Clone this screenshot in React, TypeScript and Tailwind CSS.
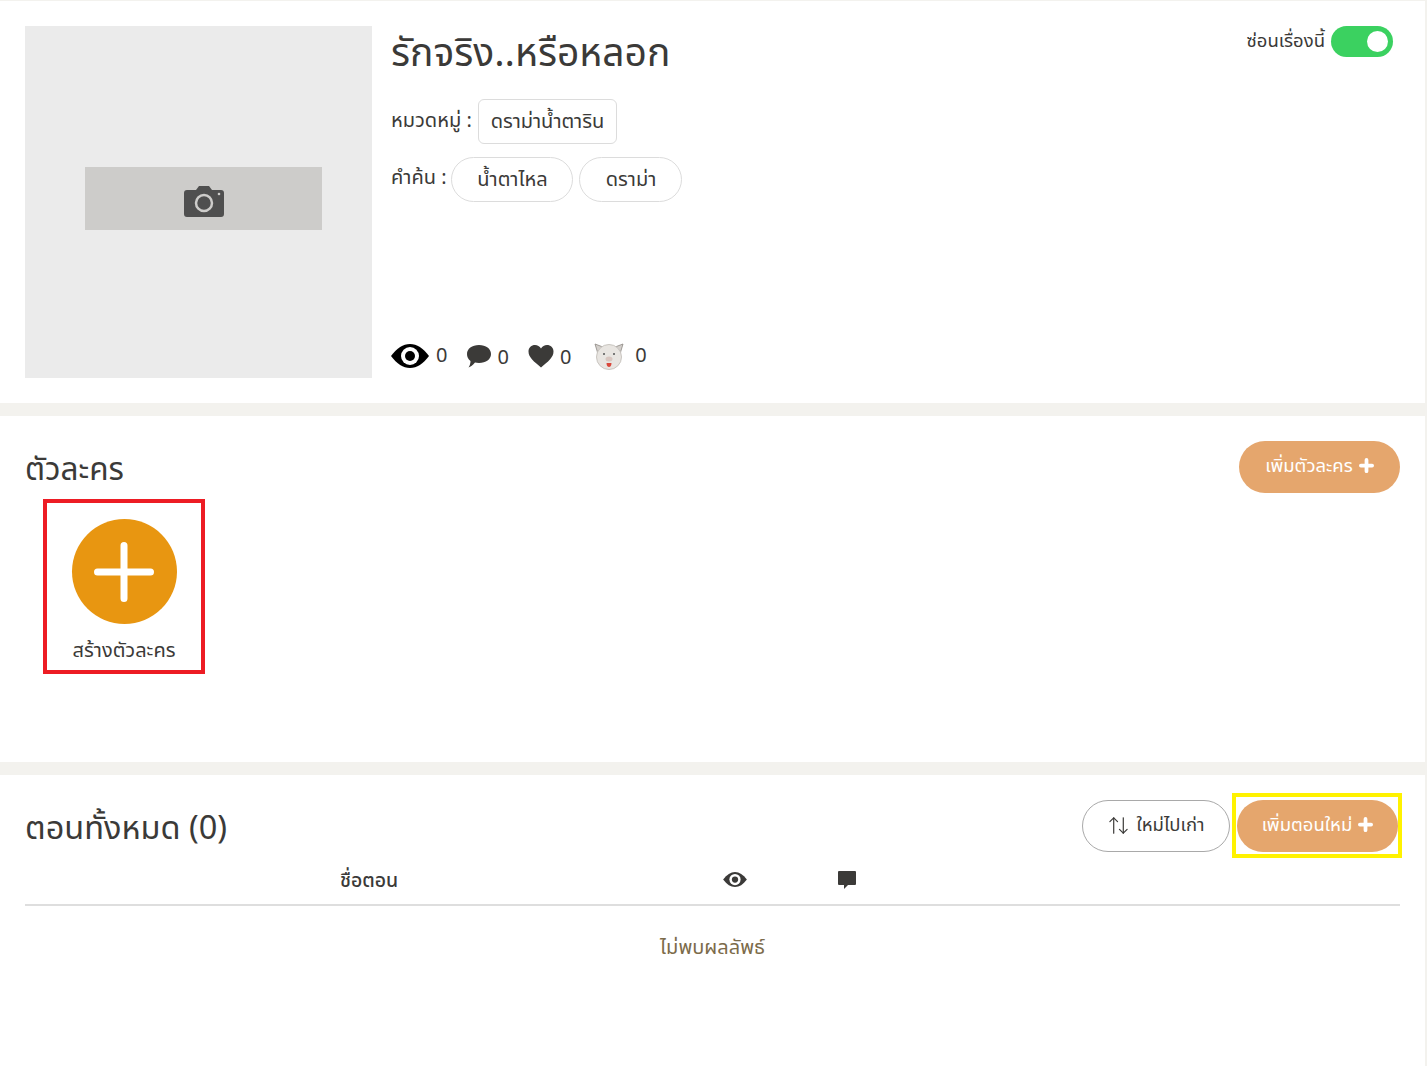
import { ArrowUpDown } from "lucide-react";

const font = { fontFamily: '"Noto Sans Thai", "Noto Sans", Inter, "DejaVu Sans", sans-serif' };

function EyeIcon({ className }: { className?: string }) {
  return (
    <svg viewBox="0 0 38 24" className={className}>
      <path d="M0 12C6 4 12 0 19 0s13 4 19 12c-6 8-12 12-19 12S6 20 0 12z" fill="currentColor" />
      <circle cx="19" cy="12" r="9" fill="#fff" />
      <circle cx="19" cy="12" r="5" fill="currentColor" />
    </svg>
  );
}

function PigIcon() {
  return (
    <svg viewBox="0 0 32 28" className="h-[28px] w-[32px]">
      <path d="M2 2l8 3-5 7zM30 2l-8 3 5 7z" fill="#d3cfcb" stroke="#8d8883" strokeWidth="0.8" />
      <circle cx="16" cy="15" r="12.5" fill="#e8e5e1" stroke="#c9c5c0" />
      <circle cx="11" cy="12" r="1" fill="#555" />
      <circle cx="21" cy="12" r="1" fill="#555" />
      <ellipse cx="16" cy="17" rx="3.5" ry="2.5" fill="#d8c6c0" />
      <path d="M13.5 21h5c0 3-1.5 4-2.5 4s-2.500-1-2.500-4z" fill="#d9473b" />
    </svg>
  );
}

function PlusSmall() {
  return (
    <svg viewBox="0 0 16 16" className="h-[15px] w-[15px]">
      <path d="M8 2v12M2 8h12" stroke="#fff" strokeWidth="4" strokeLinecap="round" />
    </svg>
  );
}

function Stat({ icon, value, shift }: { icon: React.ReactNode; value: string; shift: string }) {
  return (
    <div className="flex items-center gap-[7px]">
      {icon}
      <span className={`text-[20px] leading-none text-[#3b3a38] ${shift}`}>{value}</span>
    </div>
  );
}

export default function App() {
  return (
    <div style={font} className="min-h-[1066px] bg-[#f3f2ee] pt-px pr-[2px] text-[#3b3a38]">
      {/* ข้อมูลเรื่อง */}
      <section className="flex h-[402px] bg-white pl-[25px] pr-[32px] pt-[25px]">
        <div className="flex h-[352px] w-[347px] shrink-0 items-start bg-[#ebebeb] pl-[60px] pt-[141px]">
          <div className="flex h-[63px] w-[237px] items-center justify-center bg-[#cdccca] pt-[5px]">
            <svg viewBox="0 0 40 32" className="h-[32px] w-[40px]">
              <path d="M3 5h9l3-4h10l3 4h9a3 3 0 0 1 3 3v21a3 3 0 0 1-3 3H3a3 3 0 0 1-3-3V8a3 3 0 0 1 3-3z" fill="#4f4f4f" />
              <circle cx="20" cy="18" r="8" fill="none" stroke="#cdccca" strokeWidth="2.500" />
              <circle cx="35" cy="9" r="1.300" fill="#cdccca" />
            </svg>
          </div>
        </div>
        <div className="ml-[19px] flex h-[352px] flex-1 flex-col">
          <h1 className="pt-[2px] text-[39px] font-normal leading-[54px]">รักจริง..หรือหลอก</h1>
          <div className="mt-[17px] flex items-center gap-[6px] text-[20px]">
            <span className="-mt-[1px]">หมวดหมู่ :</span>
            <span className="flex h-[45px] items-center rounded-[6px] border border-[#dcdcdc] px-[12px] tracking-[-0.05px]">ดราม่าน้ำตาริน</span>
          </div>
          <div className="mt-[13px] flex items-center gap-[4px] text-[20px]">
            <span className="-mt-[3px]">คำค้น :</span>
            <span className="flex h-[45px] w-[122px] items-center justify-center rounded-full border border-[#dcdcdc] pl-[2px]">น้ำตาไหล</span>
            <span className="ml-[2px] flex h-[45px] w-[103px] items-center justify-center rounded-full border border-[#dcdcdc] pl-[2px]">ดราม่า</span>
          </div>
          <div className="mt-auto flex items-center gap-[19px] pb-[8px]">
            <Stat icon={<EyeIcon className="h-[24px] w-[38px] text-black" />} value="0" shift="-mt-[1px]" />
            <Stat
              icon={
                <svg viewBox="0 0 26 24" className="h-[24px] w-[26px] fill-[#3b3a38]">
                  <path d="M13 1c7 0 12 3.800 12 9s-5 9-12 9c-1.500 0-3-.2-4-.5C7 21 4.500 23 2.500 23.500 4 21.500 4.500 19 4.500 17 2 15 1 12.800 1 10c0-5.200 5-9 12-9z" />
                </svg>
              }
              value="0"
              shift="mt-[4px] -ml-[2px]"
            />
            <Stat
              icon={
                <svg viewBox="0 0 26 24" className="h-[24px] w-[26px] fill-[#3b3a38]">
                  <path d="M13 23.500C6 17.500 0.500 13.500 0.500 7.500 0.500 3.500 3.500 1 7 1c2.500 0 4.700 1.300 6 3.500C14.300 2.300 16.500 1 19 1c3.500 0 6.500 2.500 6.500 6.500 0 6-5.500 10-12.500 16z" />
                </svg>
              }
              value="0"
              shift="mt-[4px] -ml-[1px]"
            />
            <div className="ml-[3px] flex items-center gap-[10px]">
              <PigIcon />
              <span className="-mt-[1px] text-[20px] leading-none">0</span>
            </div>
          </div>
        </div>
        <div className="-mt-[1px] flex h-[32px] items-center gap-[6px] text-[18.500px]">
          <span className="mt-[1px] whitespace-nowrap">ซ่อนเรื่องนี้</span>
          <span className="flex h-[31px] w-[62px] items-center justify-end rounded-full bg-[#3bd160] pr-[5px]">
            <span className="h-[21px] w-[21px] rounded-full bg-white" />
          </span>
        </div>
      </section>

      {/* ตัวละคร */}
      <section className="mt-[13px] h-[346px] bg-white pl-[25px] pr-[25px] pt-[25px]">
        <div className="flex items-start justify-between">
          <h2 className="mt-[7px] h-[44px] text-[31.500px] font-normal leading-[46px]">ตัวละคร</h2>
          <button className="flex h-[52px] w-[161px] items-center justify-center gap-[6px] rounded-full bg-[#e5a66d] pb-[1px] text-[18.500px] text-white">
            เพิ่มตัวละคร <span className="-mt-[2px]"><PlusSmall /></span>
          </button>
        </div>
        <div className="ml-[18px] mt-[6px] flex h-[175px] w-[162px] flex-col items-center border-4 border-[#ed1c24] pt-[16px]">
          <div className="flex h-[105px] w-[105px] items-center justify-center rounded-full bg-[#e89611]">
            <svg viewBox="0 0 60 60" className="h-[60px] w-[60px]">
              <path d="M30 3.500v53M3.500 30h53" stroke="#fff" strokeWidth="7" strokeLinecap="round" />
            </svg>
          </div>
          <span className="mt-[12px] text-[20px] leading-[30px]">สร้างตัวละคร</span>
        </div>
      </section>

      {/* ตอนทั้งหมด */}
      <section className="mt-[13px] h-[291px] bg-white pl-[25px] pr-[25px] pt-[18px]">
        <div className="flex items-start justify-between">
          <h2 className="mt-[13px] h-[46px] text-[32.500px] font-normal leading-[48px]">ตอนทั้งหมด (0)</h2>
          <div className="-mr-[2px] flex h-[65px] items-center gap-[2px]">
            <button className="flex h-[52px] w-[148px] items-center justify-center gap-[6px] rounded-full border border-[#a9a9a9] text-[18.500px]">
              <ArrowUpDown className="h-[23px] w-[23px]" strokeWidth={1.250} />
              ใหม่ไปเก่า
            </button>
            <div className="border-4 border-[#fff200] pb-[2px] pl-px pt-[3px]">
              <button className="flex h-[52px] w-[161px] items-center justify-center gap-[6px] rounded-full bg-[#e5a66d] pb-[1px] text-[18.500px] text-white">
                เพิ่มตอนใหม่ <span className="-mt-[2px]"><PlusSmall /></span>
              </button>
            </div>
          </div>
        </div>
        <div className="flex h-[48px] items-center border-b-2 border-[#dedede] pt-px text-[19.500px] font-medium">
          <span className="ml-[315px] w-[383px]">ชื่อตอน</span>
          <EyeIcon className="-mt-[5px] h-[15px] w-[24px] text-[#3b3a38]" />
          <svg viewBox="0 0 20 20" className="-mt-[3px] ml-[90px] h-[20px] w-[20px] fill-[#3b3a38]">
            <path d="M2 1h16a1 1 0 0 1 1 1v12a1 1 0 0 1-1 1h-7l-4 4v-4H2a1 1 0 0 1-1-1V2a1 1 0 0 1 1-1z" />
          </svg>
        </div>
        <p className="mt-[27px] text-center text-[20px] text-[#7c6b4a]">ไม่พบผลลัพธ์</p>
      </section>
    </div>
  );
}
